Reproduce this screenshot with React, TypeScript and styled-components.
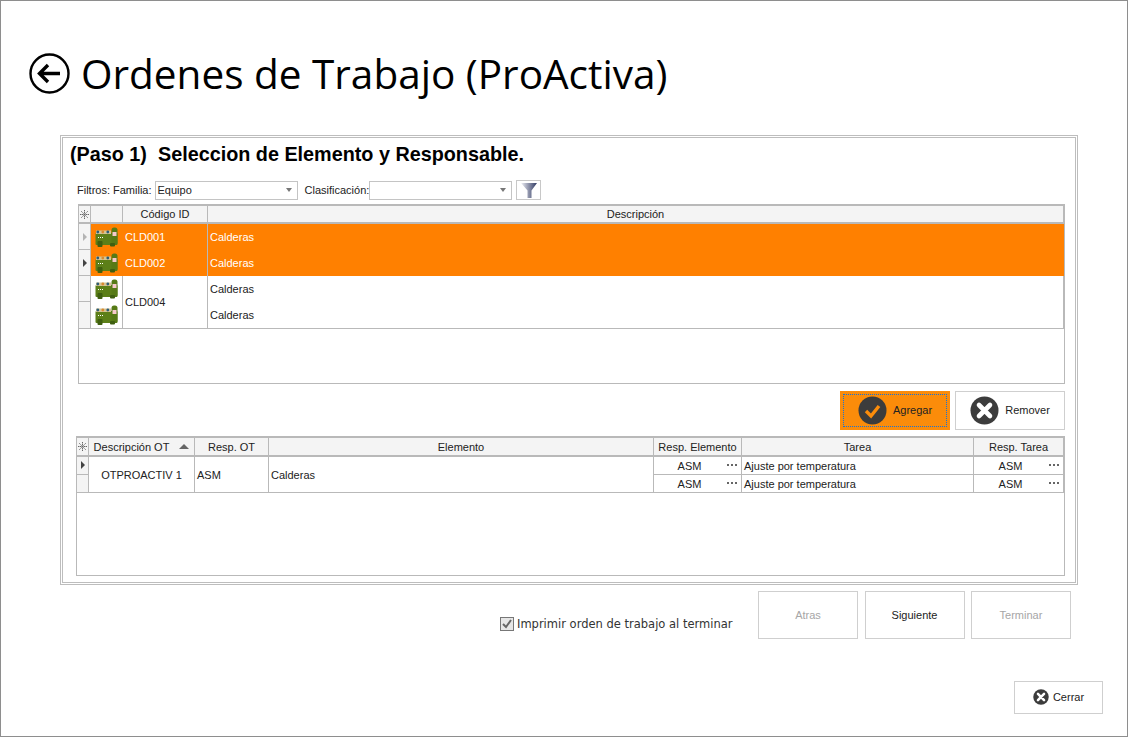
import React from "react";
import styled, { createGlobalStyle } from "styled-components";

const GlobalStyle = createGlobalStyle`
    html, body {
        margin: 0;
        padding: 0;
        background: #fff;
    }
    * {
        box-sizing: border-box;
    }
`;

const LINE = "#b9b9b9";
const HEAD = "#f4f4f4";
const ORANGE = "#ff8000";

const Window = styled.div`
    width: 1128px;
    height: 737px;
    border: 1px solid #8e8e8e;
    background: #fff;
    font-family: "Liberation Sans", Arial, sans-serif;
    font-size: 11px;
    color: #222;
    overflow: hidden;
    display: flex;
    flex-direction: column;
`;

const TitleRow = styled.div`
    display: flex;
    align-items: center;
    gap: 11px;
    height: 44px;
    margin: 50px 0 0 28px;
`;

const Title = styled.h1`
    margin: 0;
    padding-top: 2px;
    font-family: "Open Sans", sans-serif;
    font-weight: 400;
    font-size: 40.5px;
    line-height: 44px;
    color: #000;
    white-space: nowrap;
`;

const Panel = styled.section`
    width: 1018px;
    height: 450px;
    margin: 40px 0 0 59px;
    border: 1px solid #bdbdbd;
    padding: 1px;
`;

const PanelInner = styled.div`
    height: 100%;
    border: 1px solid #bdbdbd;
    padding: 0 9px 0 15px;
    display: flex;
    flex-direction: column;
`;

const StepTitle = styled.h2`
    margin: 5px 0 0 -8px;
    font-size: 19.8px;
    line-height: 22px;
    font-weight: 700;
    color: #000;
    white-space: pre;
`;

const FilterBar = styled.div`
    display: flex;
    align-items: center;
    height: 20px;
    margin: 15px 0 0 -1px;
`;

const FilterLabel = styled.span<{ $left?: number; $right?: number }>`
    margin-left: ${(p) => p.$left ?? 0}px;
    margin-right: ${(p) => p.$right ?? 0}px;
    white-space: nowrap;
    color: #222;
`;

const Select = styled.div`
    width: 143px;
    height: 19px;
    border: 1px solid #c4c4c4;
    display: flex;
    align-items: center;
    justify-content: space-between;
    padding: 0 5px 0 2px;
    color: #222;
`;

const Caret = styled.span`
    width: 0;
    height: 0;
    border-left: 3.5px solid transparent;
    border-right: 3.5px solid transparent;
    border-top: 4px solid #777;
`;

const FilterButton = styled.div`
    width: 25px;
    height: 20px;
    margin-left: 4px;
    border: 1px solid #c8c8c8;
    display: flex;
    align-items: center;
    justify-content: center;
`;

const Grid = styled.div<{ $columns: string; $rows: string; $height: number; $left: number; $top: number }>`
    width: ${(p) => 987 + p.$left}px;
    height: ${(p) => p.$height}px;
    margin: ${(p) => p.$top}px 0 0 ${(p) => -p.$left}px;
    border: 1px solid ${LINE};
    border-top-width: 2px;
    display: grid;
    grid-template-columns: ${(p) => p.$columns};
    grid-template-rows: ${(p) => p.$rows};
    align-content: start;
`;

const HeadCell = styled.div`
    background: ${HEAD};
    border-right: 1px solid ${LINE};
    border-bottom: 2px solid ${LINE};
    display: flex;
    align-items: center;
    justify-content: center;
    color: #222;
    white-space: nowrap;
`;

const SortMark = styled.span`
    width: 0;
    height: 0;
    margin-left: 10px;
    border-left: 5px solid transparent;
    border-right: 5px solid transparent;
    border-bottom: 5px solid #666;
`;

const RowHead = styled.div<{ $top?: boolean }>`
    background: ${HEAD};
    border-right: 1px solid ${LINE};
    border-bottom: 1px solid ${LINE};
    display: flex;
    align-items: ${(p) => (p.$top ? "flex-start" : "center")};
    justify-content: center;
    padding-top: ${(p) => (p.$top ? 4 : 0)}px;
`;

const Arrow = styled.span<{ $dim?: boolean }>`
    width: 0;
    height: 0;
    border-top: 4px solid transparent;
    border-bottom: 4px solid transparent;
    border-left: 4px solid ${(p) => (p.$dim ? "#b4b4b4" : "#444")};
`;

const Cell = styled.div<{
    $active?: boolean;
    $center?: boolean;
    $span?: number;
    $flat?: boolean;
    $noRule?: boolean;
}>`
    background: ${(p) => (p.$active ? ORANGE : "#fff")};
    color: ${(p) => (p.$active ? "#fff" : "#222")};
    border-right: 1px solid ${(p) => (p.$active && p.$noRule ? ORANGE : LINE)};
    border-bottom: ${(p) => (p.$flat ? "0" : `1px solid ${LINE}`)};
    grid-row: ${(p) => (p.$span ? `span ${p.$span}` : "auto")};
    display: flex;
    align-items: center;
    justify-content: ${(p) => (p.$center ? "center" : "flex-start")};
    padding: 0 2px;
    white-space: nowrap;
`;

const MoreCell = styled(Cell)`
    position: relative;
    padding-right: 18px;
`;

const Dots = styled.span`
    position: absolute;
    right: 12px;
    top: 7px;
    width: 2px;
    height: 2px;
    background: #666;
    box-shadow: 4px 0 0 #666, 8px 0 0 #666;
`;

const ActionBar = styled.div`
    display: flex;
    justify-content: flex-end;
    gap: 5px;
    height: 39px;
    margin-top: 7px;
    width: 987px;
`;

const ActionButton = styled.div<{ $primary?: boolean }>`
    position: relative;
    width: 110px;
    height: 39px;
    padding-bottom: 1px;
    background: ${(p) => (p.$primary ? "#fb8c0a" : "#fff")};
    border: 1px solid ${(p) => (p.$primary ? "#fb8c0a" : "#cfcfcf")};
    display: flex;
    align-items: center;
    justify-content: center;
    gap: 6px;
    color: #222;
`;

const FocusRing = styled.span`
    position: absolute;
    inset: 2px;
    border: 1px dotted #1673d8;
`;

const Footer = styled.div`
    display: flex;
    align-items: center;
    height: 48px;
    margin: 6px 0 0 499px;
`;

const CheckLabel = styled.label`
    display: flex;
    align-items: center;
    gap: 3px;
    width: 258px;
    padding-top: 18px;
    font-family: "DejaVu Sans", sans-serif;
    font-size: 11.5px;
    color: #333;
    white-space: nowrap;
`;

const CheckBox = styled.span`
    width: 14px;
    height: 14px;
    border: 1px solid #777;
    background: #e6e6e6;
    display: flex;
    align-items: center;
    justify-content: center;
`;

const WizardButton = styled.div<{ $disabled?: boolean }>`
    width: 100px;
    height: 48px;
    margin-right: 6.5px;
    border: 1px solid #cfcfcf;
    display: flex;
    align-items: center;
    justify-content: center;
    color: ${(p) => (p.$disabled ? "#a6a6a6" : "#222")};
`;

const CloseRow = styled.div`
    display: flex;
    justify-content: flex-end;
    margin: 42px 24px 0 0;
`;

const CloseButton = styled.div`
    width: 89px;
    height: 33px;
    padding-bottom: 1px;
    border: 1px solid #cfcfcf;
    display: flex;
    align-items: center;
    justify-content: center;
    gap: 4px;
    color: #222;
`;

function BackIcon() {
    return (
        <svg width="41" height="41" viewBox="0 0 41 41">
            <circle cx="20.5" cy="20.5" r="19" fill="none" stroke="#000" strokeWidth="2.4" />
            <path d="M31 20.5H10.5M19 12l-8.5 8.5L19 29" fill="none" stroke="#000" strokeWidth="3.4" />
        </svg>
    );
}

function FunnelIcon() {
    return (
        <svg width="16" height="15" viewBox="0 0 16 15">
            <defs>
                <linearGradient id="funnel" x1="0" x2="1" y1="0" y2="0">
                    <stop offset="0" stopColor="#eef0f6" />
                    <stop offset="0.5" stopColor="#8b90a8" />
                    <stop offset="1" stopColor="#2f3a63" />
                </linearGradient>
            </defs>
            <path d="M0 0h16l-5.5 7.5V15h-4V7.5z" fill="url(#funnel)" />
        </svg>
    );
}

function BoilerIcon() {
    return (
        <svg width="23" height="20" viewBox="0 0 23 20">
            <rect x="0.5" y="6" width="22" height="12" rx="1" fill="#5c7f18" />
            <rect x="16.5" y="0.5" width="6" height="17.5" rx="2.5" fill="#567a16" />
            <rect x="17.5" y="5" width="4" height="4" fill="#f6c9cc" />
            <rect x="1" y="3.5" width="15" height="3.5" fill="#d6c494" />
            <circle cx="2.8" cy="5" r="1.4" fill="#2c5d78" />
            <circle cx="7.8" cy="5" r="1.4" fill="#d98a30" />
            <circle cx="12.8" cy="5" r="1.4" fill="#2c5d78" />
            <path d="M3 10.5h1M5 10.5h1M7 10.5h1" stroke="#fff" strokeWidth="1" />
            <rect x="2.5" y="14" width="5" height="6" rx="1" fill="#3f5f10" />
            <rect x="15" y="16" width="5" height="3.5" rx="1" fill="#3f5f10" />
        </svg>
    );
}

function CheckCircle() {
    return (
        <svg width="29" height="29" viewBox="0 0 29 29">
            <circle cx="14.5" cy="14.5" r="14" fill="#3c3c3c" />
            <path d="M8 15l5 5 8-10" fill="none" stroke="#fb8c0a" strokeWidth="3.4" />
        </svg>
    );
}

function CrossCircle({ size }: { size: number }) {
    return (
        <svg width={size} height={size} viewBox="0 0 29 29">
            <circle cx="14.5" cy="14.5" r="14" fill="#3c3c3c" />
            <path d="M9 9l11 11M20 9L9 20" fill="none" stroke="#fff" strokeWidth="4.6" strokeLinecap="round" />
        </svg>
    );
}

function Asterisk() {
    return (
        <svg width="9" height="9" viewBox="0 0 9 9">
            <path d="M4.5 0v9M0 4.5h9M1.3 1.3l6.4 6.4M7.7 1.3L1.3 7.7" stroke="#666" strokeWidth="1" strokeDasharray="1.4 0.5" />
        </svg>
    );
}

const elements = [
    { code: "CLD001", arrow: "dim" },
    { code: "CLD002", arrow: "dark" },
];

export default function App() {
    return (
        <Window>
            <GlobalStyle />
            <TitleRow>
                <BackIcon />
                <Title>Ordenes de Trabajo (ProActiva)</Title>
            </TitleRow>
            <Panel>
                <PanelInner>
                    <StepTitle>(Paso 1)  Seleccion de Elemento y Responsable.</StepTitle>
                    <FilterBar>
                        <FilterLabel $right={3}>Filtros:</FilterLabel>
                        <FilterLabel $right={3}>Familia:</FilterLabel>
                        <Select>
                            Equipo
                            <Caret />
                        </Select>
                        <FilterLabel $left={7}>Clasificación:</FilterLabel>
                        <Select>
                            <span />
                            <Caret />
                        </Select>
                        <FilterButton>
                            <FunnelIcon />
                        </FilterButton>
                    </FilterBar>
                    <Grid $columns="12px 32px 85px 1fr" $rows="18px 26px 26px 26px 27px" $height={180} $left={0} $top={4}>
                        <HeadCell><Asterisk /></HeadCell>
                        <HeadCell />
                        <HeadCell>Código ID</HeadCell>
                        <HeadCell>Descripción</HeadCell>
                        {elements.map((el) => (
                            <React.Fragment key={el.code}>
                                <RowHead><Arrow $dim={el.arrow === "dim"} /></RowHead>
                                <Cell $active $center $noRule $flat><BoilerIcon /></Cell>
                                <Cell $active $flat>{el.code}</Cell>
                                <Cell $active $flat $noRule>Calderas</Cell>
                            </React.Fragment>
                        ))}
                        <RowHead />
                        <Cell $center $flat><BoilerIcon /></Cell>
                        <Cell $span={2}>CLD004</Cell>
                        <Cell $flat>Calderas</Cell>
                        <RowHead />
                        <Cell $center><BoilerIcon /></Cell>
                        <Cell>Calderas</Cell>
                    </Grid>
                    <ActionBar>
                        <ActionButton $primary>
                            <FocusRing />
                            <CheckCircle />
                            Agregar
                        </ActionButton>
                        <ActionButton>
                            <CrossCircle size={29} />
                            Remover
                        </ActionButton>
                    </ActionBar>
                    <Grid
                        $columns="12px 106px 74px 385px 88px 232px 1fr"
                        $rows="19px 18px 18px"
                        $height={140}
                        $left={2}
                        $top={6}
                    >
                        <HeadCell><Asterisk /></HeadCell>
                        <HeadCell>Descripción OT<SortMark /></HeadCell>
                        <HeadCell>Resp. OT</HeadCell>
                        <HeadCell>Elemento</HeadCell>
                        <HeadCell>Resp. Elemento</HeadCell>
                        <HeadCell>Tarea</HeadCell>
                        <HeadCell>Resp. Tarea</HeadCell>
                        <RowHead $top><Arrow /></RowHead>
                        <Cell $center $span={2}>OTPROACTIV 1</Cell>
                        <Cell $span={2}>ASM</Cell>
                        <Cell $span={2}>Calderas</Cell>
                        <MoreCell $center>ASM<Dots /></MoreCell>
                        <Cell>Ajuste por temperatura</Cell>
                        <MoreCell $center>ASM<Dots /></MoreCell>
                        <RowHead />
                        <MoreCell $center>ASM<Dots /></MoreCell>
                        <Cell>Ajuste por temperatura</Cell>
                        <MoreCell $center>ASM<Dots /></MoreCell>
                    </Grid>
                </PanelInner>
            </Panel>
            <Footer>
                <CheckLabel>
                    <CheckBox>
                        <svg width="12" height="12" viewBox="0 0 12 12">
                            <path d="M2 6l3 3 5-7" fill="none" stroke="#666" strokeWidth="2" />
                        </svg>
                    </CheckBox>
                    Imprimir orden de trabajo al terminar
                </CheckLabel>
                <WizardButton $disabled>Atras</WizardButton>
                <WizardButton>Siguiente</WizardButton>
                <WizardButton $disabled>Terminar</WizardButton>
            </Footer>
            <CloseRow>
                <CloseButton>
                    <CrossCircle size={16} />
                    Cerrar
                </CloseButton>
            </CloseRow>
        </Window>
    );
}
